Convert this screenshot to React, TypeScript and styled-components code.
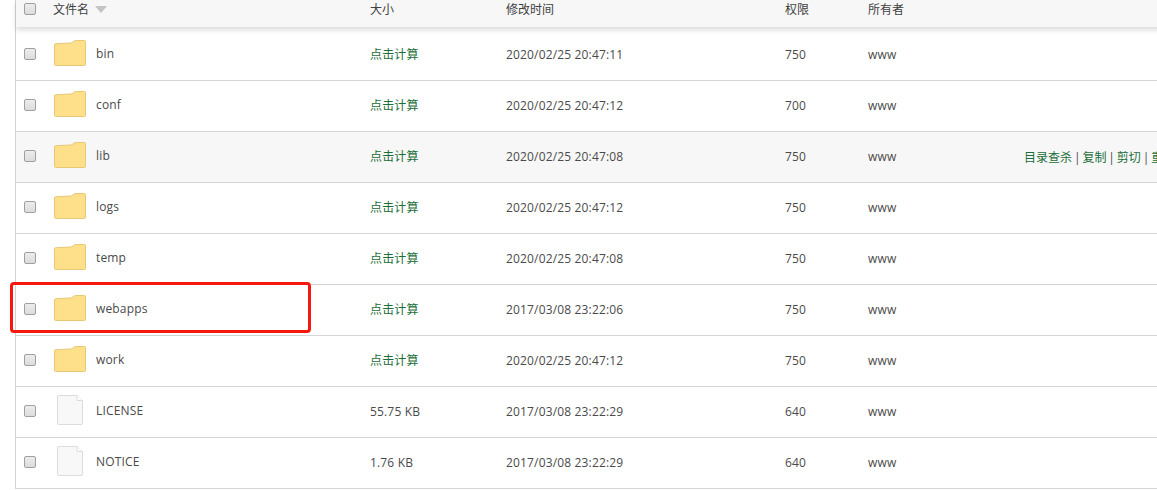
import styled, { createGlobalStyle } from "styled-components";

interface FileItem {
    name: string;
    isDir: boolean;
    size: string;
    time: string;
    perm: string;
}

const files: FileItem[] = [
    { name: "bin", isDir: true, size: "点击计算", time: "2020/02/25 20:47:11", perm: "750" },
    { name: "conf", isDir: true, size: "点击计算", time: "2020/02/25 20:47:12", perm: "700" },
    { name: "lib", isDir: true, size: "点击计算", time: "2020/02/25 20:47:08", perm: "750" },
    { name: "logs", isDir: true, size: "点击计算", time: "2020/02/25 20:47:12", perm: "750" },
    { name: "temp", isDir: true, size: "点击计算", time: "2020/02/25 20:47:08", perm: "750" },
    { name: "webapps", isDir: true, size: "点击计算", time: "2017/03/08 23:22:06", perm: "750" },
    { name: "work", isDir: true, size: "点击计算", time: "2020/02/25 20:47:12", perm: "750" },
    { name: "LICENSE", isDir: false, size: "55.75 KB", time: "2017/03/08 23:22:29", perm: "640" },
    { name: "NOTICE", isDir: false, size: "1.76 KB", time: "2017/03/08 23:22:29", perm: "640" },
];

const actions = ["目录查杀", "复制", "剪切", "重命名"];

function FolderIcon() {
    return (
        <svg width="32" height="26" viewBox="0 0 32 26">
            <path
                d="M0.5 5 Q0.5 3.8 2 3.7 L16.5 3 Q18 3 19 2 L20 1 Q20.5 0.5 21.5 0.5 L30.5 0.5 Q31.5 0.5 31.5 1.5 L31.5 24.5 Q31.5 25.5 30.5 25.5 L1.5 25.5 Q0.5 25.5 0.5 24.5 Z"
                fill="#ffe08a"
                stroke="#e6c878"
            />
        </svg>
    );
}

function FileIcon() {
    return (
        <svg width="26" height="30" viewBox="0 0 26 30">
            <path
                d="M2 0.5 L20 0.5 L25.5 5.5 L25.5 28 Q25.5 29.5 24 29.5 L2 29.5 Q0.5 29.5 0.5 28 L0.5 2 Q0.5 0.5 2 0.5 Z"
                fill="#f8f8f8"
                stroke="#dcdcdc"
            />
            <path d="M20 0.5 L20 5.5 L25.5 5.5" fill="#ffffff" stroke="#dcdcdc" />
        </svg>
    );
}

export default function App() {
    return (
        <Page>
            <GlobalStyle />
            <Table>
                <HeaderRow>
                    <CheckCell><Check type="checkbox" /></CheckCell>
                    <NameHead>
                        文件名
                        <SortArrow />
                    </NameHead>
                    <HeadCell>大小</HeadCell>
                    <HeadCell>修改时间</HeadCell>
                    <HeadCell>权限</HeadCell>
                    <HeadCell>所有者</HeadCell>
                </HeaderRow>
                {files.map((file) => (
                    <Row key={file.name} $active={file.name === "lib"}>
                        <CheckCell><Check type="checkbox" /></CheckCell>
                        <IconCell>{file.isDir ? <FolderIcon /> : <FileIcon />}</IconCell>
                        <FileName>{file.name}</FileName>
                        <Size $link={file.isDir}>{file.size}</Size>
                        <Cell>{file.time}</Cell>
                        <Cell>{file.perm}</Cell>
                        <Cell>www</Cell>
                        {file.name === "lib" && (
                            <Actions>
                                {actions.map((action, i) => (
                                    <span key={action}>
                                        {i > 0 && <Divider>|</Divider>}
                                        <ActionLink>{action}</ActionLink>
                                    </span>
                                ))}
                            </Actions>
                        )}
                    </Row>
                ))}
            </Table>
            <Highlight />
        </Page>
    );
}

const GlobalStyle = createGlobalStyle`
    html, body {
        margin: 0;
        padding: 0;
        background: #fff;
    }
`;

const Page = styled.div`
    position: relative;
    width: 1157px;
    height: 490px;
    overflow: hidden;
    background: #fff;
    font-family: "Open Sans", "Noto Sans CJK SC", sans-serif;
    font-size: 12px;
    color: #4a4a4a;
`;

const Table = styled.div`
    margin-left: 15px;
    width: 1400px;
    border-left: 1px solid #d2d2d2;
`;

const columns = "38px 42px 274px 136px 279px 83px 1fr";

const HeaderRow = styled.div`
    position: relative;
    z-index: 1;
    display: grid;
    grid-template-columns: 38px 316px 136px 279px 83px 1fr;
    align-items: center;
    box-sizing: border-box;
    height: 27px;
    padding-bottom: 13px;
    background: #f7f7f7;
    box-shadow: 0 3px 5px rgba(0, 0, 0, 0.14);
`;

const Row = styled.div<{ $active?: boolean }>`
    position: relative;
    display: grid;
    grid-template-columns: ${columns};
    align-items: center;
    box-sizing: border-box;
    height: 51px;
    padding-bottom: 2px;
    border-bottom: 1px solid #d4d4d4;
    background: ${(p) => (p.$active ? "#f7f7f7" : "#fff")};

    &:nth-child(2) {
        height: 54px;
        padding-top: 3px;
    }
`;

const CheckCell = styled.div`
    display: flex;
    padding-left: 8px;
`;

const Check = styled.input`
    appearance: none;
    box-sizing: border-box;
    width: 12px;
    height: 12px;
    margin: 0;
    border: 1px solid #a0a0a0;
    border-radius: 2px;
    background: linear-gradient(#ececec, #dcdcdc);
`;

const NameHead = styled.div`
    display: flex;
    align-items: center;
    margin-left: -1px;
    color: #404040;
`;

const SortArrow = styled.span`
    width: 0;
    height: 0;
    margin-left: 6px;
    border-left: 6px solid transparent;
    border-right: 6px solid transparent;
    border-top: 7px solid #c4c4c4;
`;

const HeadCell = styled.div`
    color: #404040;
`;

const IconCell = styled.div`
    display: flex;
    justify-content: center;
    width: 32px;
    margin-bottom: 2px;
`;

const Cell = styled.div`
    letter-spacing: 0.16px;
    white-space: nowrap;
`;

const FileName = styled(Cell)`
    margin-bottom: 2px;
`;

const Size = styled(Cell)<{ $link: boolean }>`
    color: ${(p) => (p.$link ? "#1b6e38" : "#4a4a4a")};
`;

const Actions = styled.div`
    position: absolute;
    left: 1008px;
    top: 16px;
    white-space: nowrap;
`;

const ActionLink = styled.span`
    color: #1b6e38;
`;

const Divider = styled.span`
    display: inline-block;
    width: 10.4px;
    text-align: center;
    color: #4a4a4a;
`;

const Highlight = styled.div`
    position: absolute;
    left: 10px;
    top: 282px;
    box-sizing: border-box;
    width: 301px;
    height: 51px;
    border: 3px solid #f5180f;
    border-radius: 4px;
`;
